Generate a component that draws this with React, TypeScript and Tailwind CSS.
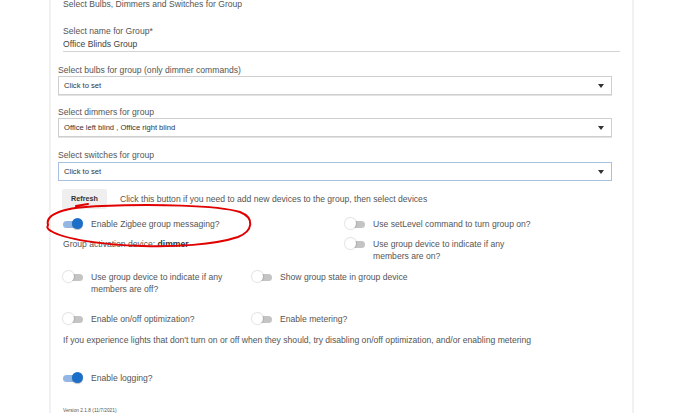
import React from 'react';

const Toggle = ({ on = false }: { on?: boolean }) => (
    <div className="relative w-[20px] h-[12px] shrink-0">
        <div
            className={
                on
                    ? 'absolute left-0 top-[3px] w-[16px] h-[7px] rounded-full bg-[#93b6e3]'
                    : 'absolute left-[4px] top-[3px] w-[16px] h-[7px] rounded-full bg-[#c4c4c4]'
            }
        />
        <div
            className={
                on
                    ? 'absolute right-0 top-0 w-[11px] h-[11px] rounded-full bg-[#1b6fc9] shadow-[0_1px_1px_rgba(0,0,0,0.25)]'
                    : 'absolute left-0 top-0 w-[11px] h-[11px] rounded-full bg-white shadow-[0_0_1px_1px_rgba(0,0,0,0.12)]'
            }
        />
    </div>
);

const SelectBox = ({ label, value, focused = false }: { label: string; value: string; focused?: boolean }) => (
    <div>
        <div className="leading-[12px]">{label}</div>
        <div
            className={
                'flex items-center justify-between h-[19px] bg-white px-[5px] border ' +
                (focused ? 'border-[#a9c0e2] mt-[1px]' : 'border-[#cfcfcf] shadow-[0_1px_0_#e2e2e2]')
            }
        >
            <span className="text-[7.6px] text-[#333]">{value}</span>
            <svg width="6" height="4" viewBox="0 0 6 4" className="mr-[2px]">
                <path d="M0 0 L6 0 L3 4 Z" fill="#333" />
            </svg>
        </div>
    </div>
);

const App = () => {
    return (
        <div className="w-[690px] h-[414px] bg-white overflow-hidden font-['Liberation_Sans',Arial,sans-serif] text-[8.6px] text-[#555]">
            <div className="relative ml-[49px] w-[585px] h-[414px] border-x-2 border-[#f1f1f1] pl-[7px] pr-[20px]">
                <div className="-mt-[1px] pl-[5px] leading-[10px]">Select Bulbs, Dimmers and Switches for Group</div>

                <div className="mt-[16px] ml-[5px] -mr-[8px] border-b border-[#d4d4d4] pb-[1px]">
                    <div className="leading-[12px]">Select name for Group*</div>
                    <div className="mt-[1px] leading-[12px] text-[#444]">Office Blinds Group</div>
                </div>

                <div className="mt-[12px]">
                    <SelectBox label="Select bulbs for group (only dimmer commands)" value="Click to set" />
                </div>
                <div className="mt-[11px]">
                    <SelectBox label="Select dimmers for group" value="Office left blind , Office right blind" />
                </div>
                <div className="mt-[12px]">
                    <SelectBox label="Select switches for group" value="Click to set" focused />
                </div>

                <div className="mt-[8px] flex items-center">
                    <button className="ml-[4px] w-[45px] h-[20px] rounded-[2px] bg-[#efefef] text-[7.2px] font-semibold text-[#333]">
                        Refresh
                    </button>
                    <span className="ml-[13px]">Click this button if you need to add new devices to the group, then select devices</span>
                </div>

                <div className="mt-[8px] ml-[5px] grid grid-cols-[282px_1fr] gap-y-[7px]">
                    <div className="flex items-center h-[14px]">
                        <Toggle on />
                        <span className="ml-[8px]">Enable Zigbee group messaging?</span>
                    </div>
                    <div className="flex items-center h-[14px]">
                        <Toggle />
                        <span className="ml-[8px]">Use setLevel command to turn group on?</span>
                    </div>
                    <div className="leading-[12px]">
                        Group activation device: <span className="font-bold text-[#333]">dimmer</span>
                    </div>
                    <div className="flex items-start">
                        <div className="mt-[0px]">
                            <Toggle />
                        </div>
                        <span className="ml-[8px] leading-[12px]">
                            Use group device to indicate if any
                            <br />
                            members are on?
                        </span>
                    </div>
                </div>

                <div className="mt-[9px] ml-[5px] grid grid-cols-[189px_1fr] gap-y-[18px]">
                    <div className="flex items-start">
                        <Toggle />
                        <span className="ml-[8px] leading-[12px]">
                            Use group device to indicate if any
                            <br />
                            members are off?
                        </span>
                    </div>
                    <div className="flex items-start">
                        <Toggle />
                        <span className="ml-[8px] leading-[12px]">Show group state in group device</span>
                    </div>
                    <div className="flex items-center h-[12px]">
                        <Toggle />
                        <span className="ml-[8px]">Enable on/off optimization?</span>
                    </div>
                    <div className="flex items-center h-[12px]">
                        <Toggle />
                        <span className="ml-[8px]">Enable metering?</span>
                    </div>
                </div>

                <div className="mt-[9px] ml-[5px] leading-[12px]">
                    If you experience lights that don't turn on or off when they should, try disabling on/off optimization, and/or enabling metering
                </div>

                <div className="mt-[25px] ml-[5px] flex items-center h-[14px]">
                    <Toggle on />
                    <span className="ml-[8px]">Enable logging?</span>
                </div>

                <div className="mt-[23px] ml-[5px] text-[4.8px] leading-[6px]">Version 2.1.8 (11/7/2021)</div>

                <svg className="absolute left-[-49px] top-0 pointer-events-none" width="690" height="414" viewBox="0 0 690 414">
                    <path
                        d="M74 207 L86 205 M46 226 C43 215 62 208 100 207 C150 205 215 206 238 213 C253 219 251 232 236 238 C212 246 172 248 140 247 C100 246 62 240 49 232 C45 230 45 228 46 226"
                        fill="none"
                        stroke="#e00000"
                        strokeWidth="2"
                        strokeLinecap="round"
                    />
                </svg>
            </div>
        </div>
    );
};

export default App;
